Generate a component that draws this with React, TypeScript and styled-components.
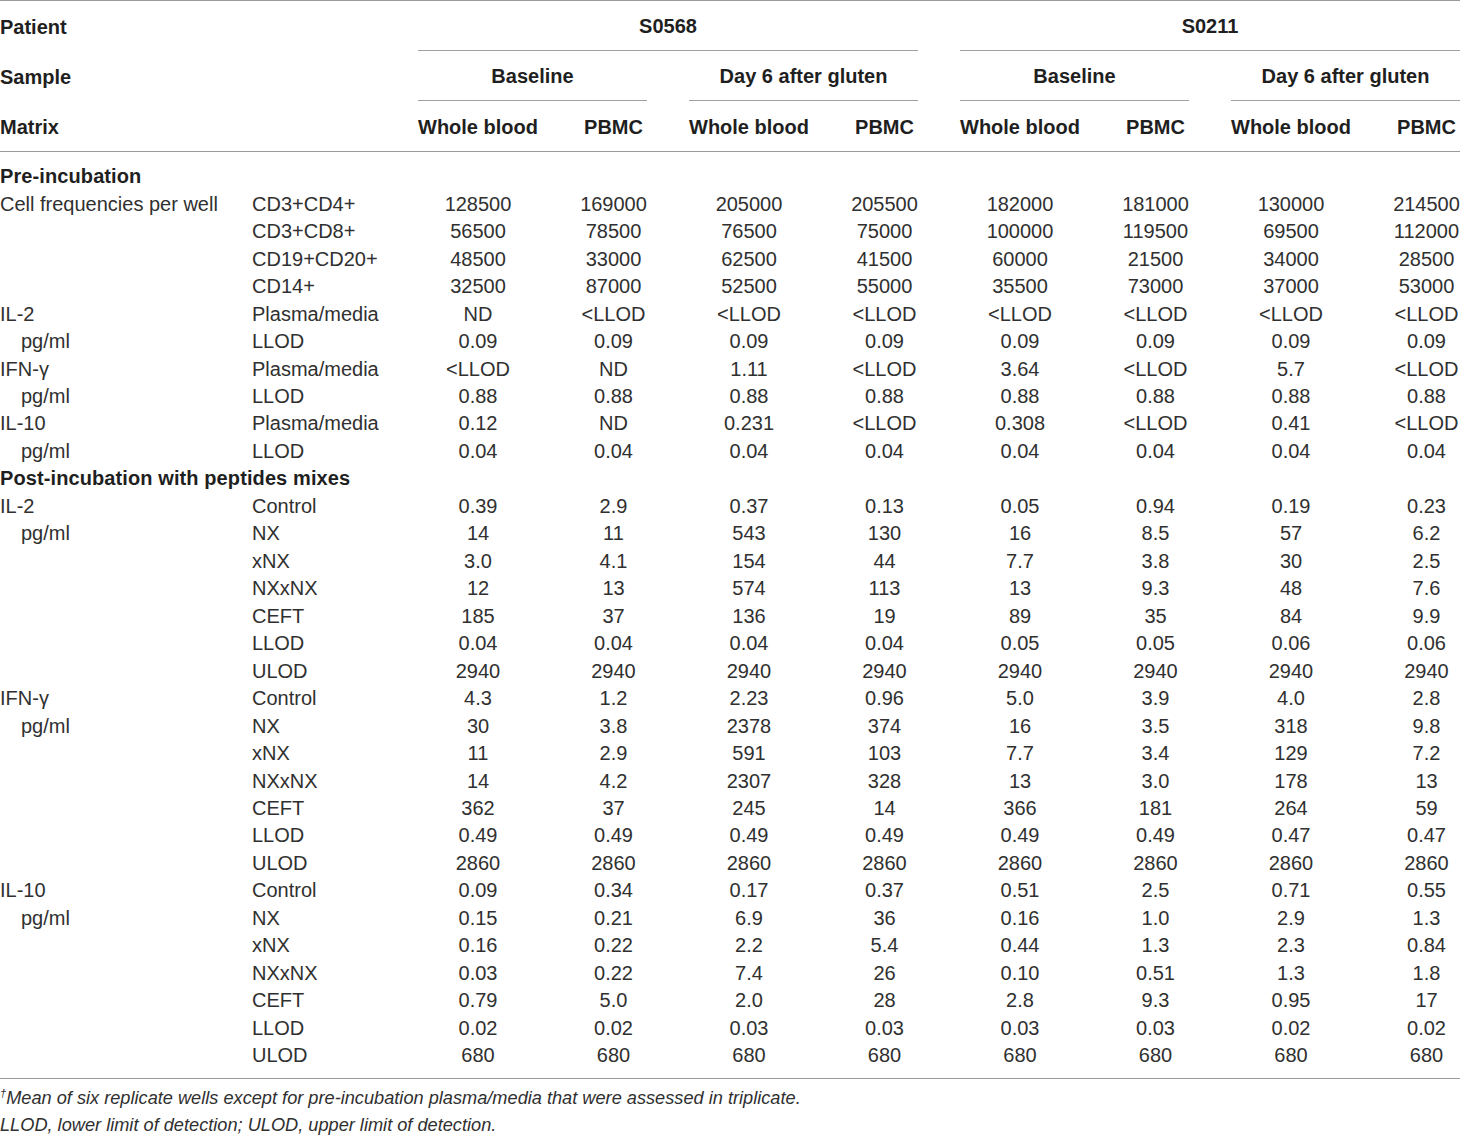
import { Fragment } from 'react';
import styled, { createGlobalStyle } from 'styled-components';

const GlobalStyle = createGlobalStyle`
  html, body {
    margin: 0;
    padding: 0;
    background: #fff;
  }
  body {
    font-family: "Liberation Sans", Arial, Helvetica, sans-serif;
    color: #231f20;
  }
`;

const COLS = '210px 124px repeat(4, 120px 67px)';

const Table = styled.div`
  width: 1460px;
  border-top: 1px solid #9a9a9a;
`;

const HeaderRow = styled.div<{ $rule?: boolean }>`
  display: grid;
  grid-template-columns: ${COLS};
  column-gap: 42px;
  height: 50px;
  border-bottom: ${p => (p.$rule ? '1px solid #9a9a9a' : 'none')};
`;

const HeadCell = styled.div<{ $span?: number; $center?: boolean; $underline?: boolean }>`
  grid-column: span ${p => p.$span || 1};
  display: flex;
  align-items: center;
  justify-content: ${p => (p.$center ? 'center' : 'flex-start')};
  padding-top: 2px;
  box-sizing: border-box;
  font-size: 20px;
  font-weight: bold;
  color: #1f1f1f;
  border-bottom: ${p => (p.$underline ? '1px solid #a0a0a0' : 'none')};
`;

const Body = styled.div`
  padding: 11px 0 9px;
  border-bottom: 1px solid #9a9a9a;
`;

const Row = styled.div`
  display: grid;
  grid-template-columns: ${COLS};
  column-gap: 42px;
  height: 27.47px;
  align-items: center;
  font-size: 20px;
  color: #303030;
`;

const Section = styled.div`
  grid-column: 1 / -1;
  font-weight: bold;
  color: #1f1f1f;
  letter-spacing: 0.1px;
`;

const Label = styled.div<{ $indent?: boolean }>`
  padding-left: ${p => (p.$indent ? '21px' : '0')};
  white-space: nowrap;
`;

const Value = styled.div`
  text-align: center;
  white-space: nowrap;
`;

const Notes = styled.div`
  padding-top: 6px;
  font-size: 18.2px;
  font-style: italic;
  color: #303030;
  line-height: 27px;
`;

const Dagger = styled.sup`
  font-size: 11px;
  vertical-align: 7px;
  line-height: 0;
`;

type DataRow = { a?: string; indent?: boolean; b: string; v: string[] };
type Block = { title: string; rows: DataRow[] };

const rep = (x: string) => Array(8).fill(x);

const blocks: Block[] = [
  {
    title: 'Pre-incubation',
    rows: [
      { a: 'Cell frequencies per well', b: 'CD3+CD4+', v: ['128500', '169000', '205000', '205500', '182000', '181000', '130000', '214500'] },
      { b: 'CD3+CD8+', v: ['56500', '78500', '76500', '75000', '100000', '119500', '69500', '112000'] },
      { b: 'CD19+CD20+', v: ['48500', '33000', '62500', '41500', '60000', '21500', '34000', '28500'] },
      { b: 'CD14+', v: ['32500', '87000', '52500', '55000', '35500', '73000', '37000', '53000'] },
      { a: 'IL-2', b: 'Plasma/media', v: ['ND', '<LLOD', '<LLOD', '<LLOD', '<LLOD', '<LLOD', '<LLOD', '<LLOD'] },
      { a: 'pg/ml', indent: true, b: 'LLOD', v: rep('0.09') },
      { a: 'IFN-γ', b: 'Plasma/media', v: ['<LLOD', 'ND', '1.11', '<LLOD', '3.64', '<LLOD', '5.7', '<LLOD'] },
      { a: 'pg/ml', indent: true, b: 'LLOD', v: rep('0.88') },
      { a: 'IL-10', b: 'Plasma/media', v: ['0.12', 'ND', '0.231', '<LLOD', '0.308', '<LLOD', '0.41', '<LLOD'] },
      { a: 'pg/ml', indent: true, b: 'LLOD', v: rep('0.04') },
    ],
  },
  {
    title: 'Post-incubation with peptides mixes',
    rows: [
      { a: 'IL-2', b: 'Control', v: ['0.39', '2.9', '0.37', '0.13', '0.05', '0.94', '0.19', '0.23'] },
      { a: 'pg/ml', indent: true, b: 'NX', v: ['14', '11', '543', '130', '16', '8.5', '57', '6.2'] },
      { b: 'xNX', v: ['3.0', '4.1', '154', '44', '7.7', '3.8', '30', '2.5'] },
      { b: 'NXxNX', v: ['12', '13', '574', '113', '13', '9.3', '48', '7.6'] },
      { b: 'CEFT', v: ['185', '37', '136', '19', '89', '35', '84', '9.9'] },
      { b: 'LLOD', v: ['0.04', '0.04', '0.04', '0.04', '0.05', '0.05', '0.06', '0.06'] },
      { b: 'ULOD', v: rep('2940') },
      { a: 'IFN-γ', b: 'Control', v: ['4.3', '1.2', '2.23', '0.96', '5.0', '3.9', '4.0', '2.8'] },
      { a: 'pg/ml', indent: true, b: 'NX', v: ['30', '3.8', '2378', '374', '16', '3.5', '318', '9.8'] },
      { b: 'xNX', v: ['11', '2.9', '591', '103', '7.7', '3.4', '129', '7.2'] },
      { b: 'NXxNX', v: ['14', '4.2', '2307', '328', '13', '3.0', '178', '13'] },
      { b: 'CEFT', v: ['362', '37', '245', '14', '366', '181', '264', '59'] },
      { b: 'LLOD', v: ['0.49', '0.49', '0.49', '0.49', '0.49', '0.49', '0.47', '0.47'] },
      { b: 'ULOD', v: rep('2860') },
      { a: 'IL-10', b: 'Control', v: ['0.09', '0.34', '0.17', '0.37', '0.51', '2.5', '0.71', '0.55'] },
      { a: 'pg/ml', indent: true, b: 'NX', v: ['0.15', '0.21', '6.9', '36', '0.16', '1.0', '2.9', '1.3'] },
      { b: 'xNX', v: ['0.16', '0.22', '2.2', '5.4', '0.44', '1.3', '2.3', '0.84'] },
      { b: 'NXxNX', v: ['0.03', '0.22', '7.4', '26', '0.10', '0.51', '1.3', '1.8'] },
      { b: 'CEFT', v: ['0.79', '5.0', '2.0', '28', '2.8', '9.3', '0.95', '17'] },
      { b: 'LLOD', v: ['0.02', '0.02', '0.03', '0.03', '0.03', '0.03', '0.02', '0.02'] },
      { b: 'ULOD', v: rep('680') },
    ],
  },
];

const patients = ['S0568', 'S0211'];

export default function App() {
  return (
    <>
      <GlobalStyle />
      <Table>
        <HeaderRow>
          <HeadCell $span={2}>Patient</HeadCell>
          {patients.map(p => (
            <HeadCell key={p} $span={4} $center $underline>{p}</HeadCell>
          ))}
        </HeaderRow>
        <HeaderRow>
          <HeadCell $span={2}>Sample</HeadCell>
          {patients.map(p => (
            <Fragment key={p}>
              <HeadCell $span={2} $center $underline>Baseline</HeadCell>
              <HeadCell $span={2} $center $underline>Day 6 after gluten</HeadCell>
            </Fragment>
          ))}
        </HeaderRow>
        <HeaderRow $rule>
          <HeadCell $span={2}>Matrix</HeadCell>
          {[0, 1, 2, 3].map(i => (
            <Fragment key={i}>
              <HeadCell $center>Whole blood</HeadCell>
              <HeadCell $center>PBMC</HeadCell>
            </Fragment>
          ))}
        </HeaderRow>
        <Body>
          {blocks.map(block => (
            <div key={block.title}>
              <Row>
                <Section>{block.title}</Section>
              </Row>
              {block.rows.map((r, i) => (
                <Row key={i}>
                  <Label $indent={r.indent}>{r.a || ''}</Label>
                  <Label>{r.b}</Label>
                  {r.v.map((x, j) => (
                    <Value key={j}>{x}</Value>
                  ))}
                </Row>
              ))}
            </div>
          ))}
        </Body>
        <Notes>
          <div>
            <Dagger>†</Dagger>Mean of six replicate wells except for pre-incubation plasma/media that were assessed in triplicate.
          </div>
          <div>LLOD, lower limit of detection; ULOD, upper limit of detection.</div>
        </Notes>
      </Table>
    </>
  );
}
